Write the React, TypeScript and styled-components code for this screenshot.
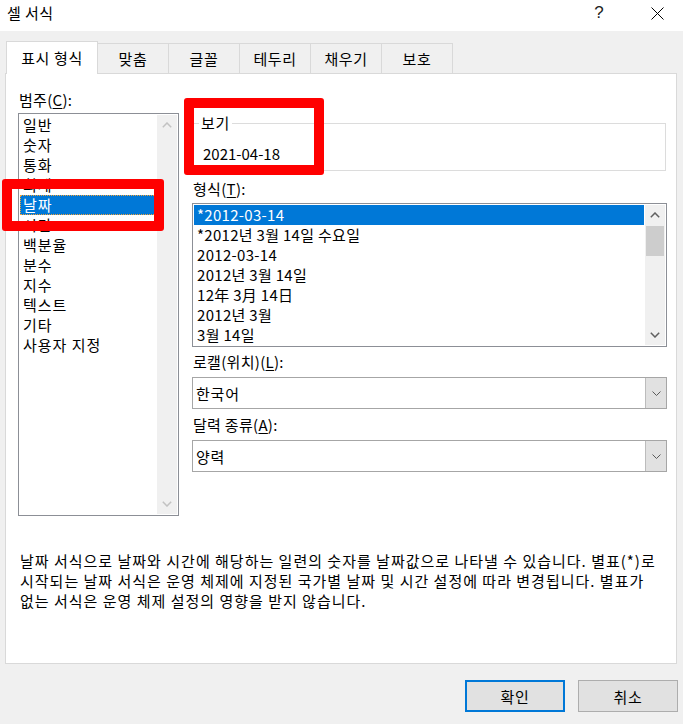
import React from 'react';
import styled, { createGlobalStyle } from 'styled-components';

const GlobalStyle = createGlobalStyle`
  html, body {
    margin: 0;
    padding: 0;
    background: #f0f0f0;
  }
  body {
    font-family: "Noto Sans CJK KR", "Noto Sans", sans-serif;
    color: #000;
  }
`;

const categories = [
  '일반',
  '숫자',
  '통화',
  '회계',
  '날짜',
  '시간',
  '백분율',
  '분수',
  '지수',
  '텍스트',
  '기타',
  '사용자 지정',
];

const formats = [
  '*2012-03-14',
  '*2012년 3월 14일 수요일',
  '2012-03-14',
  '2012년 3월 14일',
  '12年 3月 14日',
  '2012년 3월',
  '3월 14일',
];

const tabs = ['표시 형식', '맞춤', '글꼴', '테두리', '채우기', '보호'];

const Chevron = ({ dir, color }: { dir: 'up' | 'down'; color: string }) => (
  <svg width="10" height="6" viewBox="0 0 10 6">
    <polyline
      points={dir === 'up' ? '0.8,5.2 5,1 9.2,5.2' : '0.8,0.8 5,5 9.2,0.8'}
      fill="none"
      stroke={color}
      strokeWidth="1.5"
    />
  </svg>
);

const ComboArrow = () => (
  <svg width="9" height="5" viewBox="0 0 9 5">
    <polyline points="0.5,0.5 4.5,4.5 8.5,0.5" fill="none" stroke="#5a5a5a" strokeWidth="1" />
  </svg>
);

const App = () => {
  return (
    <Dialog>
      <GlobalStyle />
      <TitleBar>
        <Title>셀 서식</Title>
        <HelpButton>?</HelpButton>
        <CloseButton>
          <svg width="13" height="13" viewBox="0 0 13 13">
            <path d="M0.5 0.5 L12.5 12.5 M12.5 0.5 L0.5 12.5" stroke="#000" strokeWidth="1" />
          </svg>
        </CloseButton>
      </TitleBar>

      <Body>
        <TabRow>
          {tabs.map((t, i) => (
            <Tab key={t} $active={i === 0}>
              {t}
            </Tab>
          ))}
        </TabRow>
        <Panel>
          <ContentRow>
            <LeftCol>
              <FieldLabel>
                범주(<U>C</U>):
              </FieldLabel>
              <ListBox $height={403}>
                <Items>
                  {categories.map((c) => (
                    <CategoryItem key={c} $selected={c === '날짜'}>
                      {c}
                    </CategoryItem>
                  ))}
                </Items>
                <ScrollBar>
                  <ScrollButton>
                    <Chevron dir="up" color="#c2c2c2" />
                  </ScrollButton>
                  <ScrollTrack />
                  <ScrollButton>
                    <Chevron dir="down" color="#c2c2c2" />
                  </ScrollButton>
                </ScrollBar>
              </ListBox>
            </LeftCol>

            <RightCol>
              <PreviewGroup>
                <PreviewLegend>보기</PreviewLegend>
                <PreviewValue>2021-04-18</PreviewValue>
              </PreviewGroup>

              <FieldLabel $top={8}>
                형식(<U>T</U>):
              </FieldLabel>
              <ListBox $height={144} $top={4}>
                <Items>
                  {formats.map((f, i) => (
                    <FormatItem key={f} $selected={i === 0}>
                      {f}
                    </FormatItem>
                  ))}
                </Items>
                <ScrollBar>
                  <ScrollButton>
                    <Chevron dir="up" color="#606060" />
                  </ScrollButton>
                  <ScrollTrack>
                    <Thumb />
                  </ScrollTrack>
                  <ScrollButton>
                    <Chevron dir="down" color="#606060" />
                  </ScrollButton>
                </ScrollBar>
              </ListBox>

              <FieldLabel $top={5}>
                로캘(위치)(<U>L</U>):
              </FieldLabel>
              <Combo>
                <ComboText>한국어</ComboText>
                <ComboButton>
                  <ComboArrow />
                </ComboButton>
              </Combo>

              <FieldLabel $top={6}>
                달력 종류(<U>A</U>):
              </FieldLabel>
              <Combo>
                <ComboText>양력</ComboText>
                <ComboButton>
                  <ComboArrow />
                </ComboButton>
              </Combo>
            </RightCol>
          </ContentRow>

          <Description>
            <Line>날짜 서식으로 날짜와 시간에 해당하는 일련의 숫자를 날짜값으로 나타낼 수 있습니다. 별표(*)로</Line>
            <Line>시작되는 날짜 서식은 운영 체제에 지정된 국가별 날짜 및 시간 설정에 따라 변경됩니다. 별표가</Line>
            <Line>없는 서식은 운영 체제 설정의 영향을 받지 않습니다.</Line>
          </Description>
        </Panel>
      </Body>

      <Footer>
        <DialogButton $primary>확인</DialogButton>
        <DialogButton>취소</DialogButton>
      </Footer>

      {/* red annotation boxes drawn over the dialog */}
      <Annotation style={{ left: 2, top: 179, width: 162, height: 52 }} />
      <Annotation style={{ left: 184, top: 98, width: 140, height: 77 }} />
    </Dialog>
  );
};

export default App;

const Dialog = styled.div`
  position: relative;
  width: 683px;
  height: 724px;
  background: #f0f0f0;
  display: flex;
  flex-direction: column;
  overflow: hidden;
  font-size: 15px;
`;

const TitleBar = styled.div`
  height: 31px;
  background: #fff;
  display: flex;
  align-items: flex-start;
  padding-left: 7px;
`;

const Title = styled.div`
  flex: 1;
  line-height: 20px;
  padding-top: 3px;
  font-size: 15px;
  letter-spacing: 0.4px;
`;

const HelpButton = styled.div`
  width: 40px;
  height: 26px;
  display: flex;
  align-items: center;
  justify-content: center;
  font-family: "Liberation Sans", sans-serif;
  font-size: 17px;
  color: #222;
`;

const CloseButton = styled.div`
  width: 46px;
  height: 26px;
  margin-left: 15px;
  margin-right: 3px;
  display: flex;
  align-items: center;
  justify-content: center;
`;

const Body = styled.div`
  padding: 10px 6px 0 5px;
  display: flex;
  flex-direction: column;
`;

const TabRow = styled.div`
  display: flex;
  align-items: flex-end;
  padding-left: 1px;
  height: 33px;
  margin-bottom: -1px;
  position: relative;
  z-index: 1;
`;

const Tab = styled.div<{ $active?: boolean }>`
  box-sizing: border-box;
  width: ${(p) => (p.$active ? '92px' : '71px')};
  height: ${(p) => (p.$active ? '33px' : '30px')};
  margin-bottom: ${(p) => (p.$active ? '0' : '1px')};
  background: ${(p) => (p.$active ? '#fff' : '#f0f0f0')};
  border: 1px solid #d9d9d9;
  border-left: ${(p) => (p.$active ? '1px solid #d9d9d9' : 'none')};
  border-bottom: none;
  display: flex;
  align-items: center;
  justify-content: center;
  font-size: 15px;
  letter-spacing: 0.6px;
  padding-bottom: ${(p) => (p.$active ? '1px' : '0')};
`;

const Panel = styled.div`
  box-sizing: border-box;
  width: 672px;
  height: 591px;
  background: #fff;
  border: 1px solid #d9d9d9;
  display: flex;
  flex-direction: column;
`;

const ContentRow = styled.div`
  display: flex;
  gap: 13px;
  padding: 16px 0 0 12px;
`;

const LeftCol = styled.div`
  width: 161px;
  display: flex;
  flex-direction: column;
`;

const RightCol = styled.div`
  width: 475px;
  display: flex;
  flex-direction: column;
`;

const FieldLabel = styled.div<{ $top?: number }>`
  line-height: 20px;
  height: 20px;
  margin-top: ${(p) => p.$top ?? 0}px;
  padding-left: 1px;
  font-size: 15px;
  letter-spacing: 0.3px;
`;

const U = styled.span`
  text-decoration: underline;
  text-underline-offset: 2px;
`;

const ListBox = styled.div<{ $height: number; $top?: number }>`
  box-sizing: border-box;
  height: ${(p) => p.$height}px;
  margin-top: ${(p) => p.$top ?? 3}px;
  border: 1px solid #8c8f96;
  padding: 1px;
  display: flex;
  background: #fff;
  overflow: hidden;
`;

const Items = styled.div`
  flex: 1;
  min-width: 0;
  display: flex;
  flex-direction: column;
`;

const CategoryItem = styled.div<{ $selected?: boolean }>`
  box-sizing: border-box;
  height: 20px;
  line-height: 20px;
  padding-left: 3px;
  margin-right: 1px;
  font-size: 15px;
  letter-spacing: 1px;
  white-space: nowrap;
  background: ${(p) => (p.$selected ? '#0078d7' : 'transparent')};
  color: ${(p) => (p.$selected ? '#fff' : '#000')};
  outline: ${(p) => (p.$selected ? '1px dotted #f2a33a' : 'none')};
  outline-offset: -1px;
`;

const FormatItem = styled.div<{ $selected?: boolean }>`
  height: 20px;
  line-height: 20px;
  padding-left: 3px;
  margin-right: 1px;
  font-size: 15px;
  letter-spacing: 0.3px;
  white-space: nowrap;
  background: ${(p) => (p.$selected ? '#0078d7' : 'transparent')};
  color: ${(p) => (p.$selected ? '#fff' : '#000')};
`;

const ScrollBar = styled.div`
  width: 20px;
  background: #f0f0f0;
  display: flex;
  flex-direction: column;
`;

const ScrollButton = styled.div`
  height: 20px;
  display: flex;
  align-items: center;
  justify-content: center;
`;

const ScrollTrack = styled.div`
  flex: 1;
  padding-top: 1px;
`;

const Thumb = styled.div`
  width: 18px;
  height: 30px;
  margin-left: 1px;
  background: #cdcdcd;
`;

const PreviewGroup = styled.fieldset`
  margin: 23px 1px 0 0;
  padding: 0 6px 6px;
  border: 1px solid #dcdcdc;
  min-width: 0;
`;

const PreviewLegend = styled.legend`
  padding: 0 2px;
  line-height: 20px;
  font-size: 15px;
  letter-spacing: 0.6px;
`;

const PreviewValue = styled.div`
  margin-top: 11px;
  padding-left: 4px;
  line-height: 20px;
  font-size: 15px;
`;

const Combo = styled.div`
  box-sizing: border-box;
  height: 32px;
  margin-top: 5px;
  border: 1px solid #a6a6a6;
  display: flex;
  background: #fff;
`;

const ComboText = styled.div`
  flex: 1;
  display: flex;
  align-items: center;
  padding-left: 3px;
  font-size: 15px;
  letter-spacing: 0.8px;
`;

const ComboButton = styled.div`
  width: 20px;
  background: #e1e1e1;
  border-left: 1px solid #bcbcbc;
  display: flex;
  align-items: center;
  justify-content: center;
`;

const Description = styled.div`
  margin-top: 35px;
  padding-left: 14px;
  font-size: 15px;
  letter-spacing: 1px;
`;

const Line = styled.div`
  line-height: 20px;
  white-space: nowrap;
`;

const Footer = styled.div`
  display: flex;
  justify-content: flex-end;
  gap: 13px;
  padding: 16px 5px 0 0;
`;

const DialogButton = styled.div<{ $primary?: boolean }>`
  box-sizing: border-box;
  width: 100px;
  height: 32px;
  background: #e1e1e1;
  border: ${(p) => (p.$primary ? '2px solid #0078d7' : '1px solid #adadad')};
  display: flex;
  align-items: center;
  justify-content: center;
  font-size: 15px;
  letter-spacing: 0.8px;
`;

const Annotation = styled.div`
  position: absolute;
  box-sizing: border-box;
  border: 10px solid #ff0000;
  border-radius: 3px;
  pointer-events: none;
`;
